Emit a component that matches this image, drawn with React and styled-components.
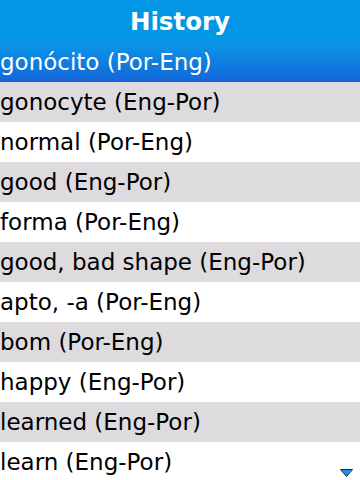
import React from "react";
import styled, { createGlobalStyle } from "styled-components";

const entries = [
  "gonócito (Por-Eng)",
  "gonocyte (Eng-Por)",
  "normal (Por-Eng)",
  "good (Eng-Por)",
  "forma (Por-Eng)",
  "good, bad shape (Eng-Por)",
  "apto, -a (Por-Eng)",
  "bom (Por-Eng)",
  "happy (Eng-Por)",
  "learned (Eng-Por)",
  "learn (Eng-Por)",
];

const App = () => {
  return (
    <Screen>
      <GlobalStyle />
      <Header>History</Header>
      <List>
        {entries.map((text, i) => (
          <Row key={text} $selected={i === 0} $shaded={i % 2 === 1}>
            {text}
          </Row>
        ))}
      </List>
      <ScrollArrow width="13" height="8" viewBox="0 0 13 8">
        <path d="M0.5 0.5 H12.5 L6.5 7.5 Z" fill="#1a8ff0" stroke="#1b2a3a" strokeWidth="1" />
      </ScrollArrow>
    </Screen>
  );
};

const GlobalStyle = createGlobalStyle`
  html, body {
    margin: 0;
    padding: 0;
    background: #fff;
  }
`;

const Screen = styled.div`
  position: relative;
  width: 360px;
  height: 480px;
  overflow: hidden;
  font-family: "DejaVu Sans", sans-serif;
  background: #fff;
`;

const Header = styled.div`
  height: 42px;
  display: flex;
  align-items: center;
  justify-content: center;
  background: #0396e4;
  color: #fff;
  font-weight: bold;
  font-size: 24.5px;
`;

const List = styled.ul`
  margin: 0;
  padding: 0;
  list-style: none;
`;

const Row = styled.li`
  height: 40px;
  display: flex;
  align-items: center;
  padding-left: 0;
  font-size: 23px;
  white-space: nowrap;
  color: ${(p) => (p.$selected ? "#fff" : "#000")};
  background: ${(p) =>
    p.$selected
      ? "linear-gradient(to bottom, #0a97e6, #1466d9)"
      : p.$shaded
      ? "#dddbde"
      : "#fff"};
`;

const ScrollArrow = styled.svg`
  position: absolute;
  right: 7px;
  bottom: 3px;
`;

export default App;
